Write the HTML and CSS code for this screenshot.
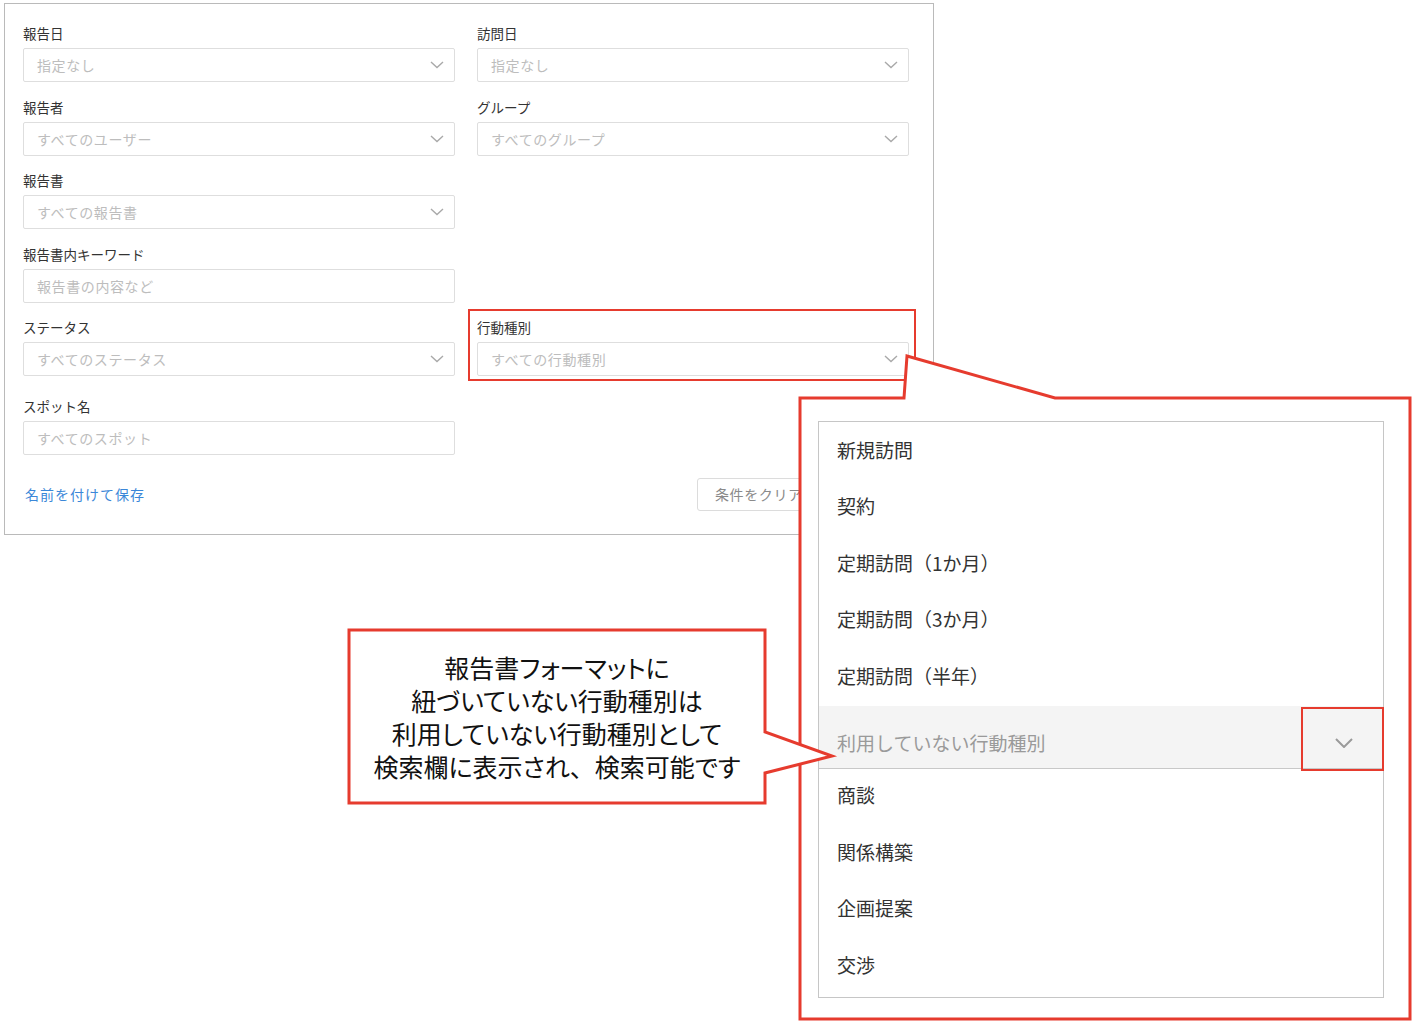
FILE: index.html
```html
<!DOCTYPE html>
<html lang="ja">
  <head>
    <meta charset="UTF-8" />
    <meta name="viewport" content="width=device-width, initial-scale=1.0" />
    <title>検索条件</title>
    <link rel="stylesheet" href="styles.css">
  </head>
  <body>
    <div class="page">
      <div class="panel">
        <div class="fields">
          <div class="field left">
            <label>報告日</label>
            <div class="select"><span>指定なし</span><svg class="chev" viewBox="0 0 14 8"><polyline points="1,1 7,6.5 13,1" /></svg></div>
          </div>
          <div class="field right">
            <label>訪問日</label>
            <div class="select"><span>指定なし</span><svg class="chev" viewBox="0 0 14 8"><polyline points="1,1 7,6.5 13,1" /></svg></div>
          </div>
          <div class="field left">
            <label>報告者</label>
            <div class="select"><span>すべてのユーザー</span><svg class="chev" viewBox="0 0 14 8"><polyline points="1,1 7,6.5 13,1" /></svg></div>
          </div>
          <div class="field right">
            <label>グループ</label>
            <div class="select"><span>すべてのグループ</span><svg class="chev" viewBox="0 0 14 8"><polyline points="1,1 7,6.5 13,1" /></svg></div>
          </div>
          <div class="field left">
            <label>報告書</label>
            <div class="select"><span>すべての報告書</span><svg class="chev" viewBox="0 0 14 8"><polyline points="1,1 7,6.5 13,1" /></svg></div>
          </div>
          <div class="field left">
            <label>報告書内キーワード</label>
            <div class="select"><span>報告書の内容など</span></div>
          </div>
          <div class="field left">
            <label>ステータス</label>
            <div class="select"><span>すべてのステータス</span><svg class="chev" viewBox="0 0 14 8"><polyline points="1,1 7,6.5 13,1" /></svg></div>
          </div>
          <div class="field right marked">
            <label>行動種別</label>
            <div class="select"><span>すべての行動種別</span><svg class="chev" viewBox="0 0 14 8"><polyline points="1,1 7,6.5 13,1" /></svg></div>
          </div>
          <div class="field left spot">
            <label>スポット名</label>
            <div class="select"><span>すべてのスポット</span></div>
          </div>
        </div>

        <div class="footer">
          <a class="save-link" href="#">名前を付けて保存</a>
          <div class="buttons">
            <button class="btn btn-clear">条件をクリア</button>
          </div>
        </div>
      </div>

      <!-- 拡大表示の吹き出し -->
      <svg class="shapes" width="1416" height="1024" viewBox="0 0 1416 1024">
        <polygon points="800,398 904,398 907,356 1055,398 1410,398 1410,1019 800,1019" />
      </svg>

      <div class="menu">
        <div class="menu-item">新規訪問</div>
        <div class="menu-item">契約</div>
        <div class="menu-item">定期訪問（1か月）</div>
        <div class="menu-item">定期訪問（3か月）</div>
        <div class="menu-item">定期訪問（半年）</div>
        <div class="menu-group">
          <span>利用していない行動種別</span>
          <svg class="group-chev" viewBox="0 0 18 10"><polyline points="1,1 9,9 17,1" /></svg>
          <div class="group-mark"></div>
        </div>
        <div class="menu-item">商談</div>
        <div class="menu-item">関係構築</div>
        <div class="menu-item">企画提案</div>
        <div class="menu-item">交渉</div>
      </div>

      <div class="note">
        <svg width="416" height="173" viewBox="0 0 416 173">
          <polygon points="0,0 416,0 416,102 483,126 416,143 416,173 0,173" />
        </svg>
        <div class="note-text">
          報告書フォーマットに<br>
          紐づいていない行動種別は<br>
          利用していない行動種別として<br>
          検索欄に表示され<span class="wide">、</span>検索可能です
        </div>
      </div>
    </div>
  </body>
</html>
```

FILE: styles.css
```css
* {
  box-sizing: border-box;
}
body {
  margin: 0;
  font-family: "Noto Sans CJK JP", "Noto Sans", sans-serif;
  color: #333;
  background-color: #fff;
}
.page {
  position: relative;
  width: 1416px;
  height: 1024px;
  overflow: hidden;
}
.panel {
  width: 930px;
  margin: 3px 0 0 4px;
  padding: 20px 0 23px 18px;
  border: 1px solid #bababa;
  background-color: #fff;
}
.fields {
  display: grid;
  grid-template-columns: 432px 432px;
  column-gap: 22px;
  row-gap: 15.5px;
}
.field {
  display: flex;
  flex-direction: column;
  gap: 4px;
}
.field.left {
  grid-column: 1;
}
.field.right {
  grid-column: 2;
}
.field.spot {
  margin-top: 5px;
}
.field label {
  font-size: 13.5px;
  line-height: 19px;
  margin-bottom: 1px;
  color: #333;
}
.select {
  height: 34px;
  border: 1px solid #dedede;
  border-radius: 2px;
  display: flex;
  align-items: center;
  justify-content: space-between;
  padding: 0 10px 0 13px;
  font-size: 14px;
  letter-spacing: 0.6px;
  color: #bdbdbd;
}
.chev {
  width: 14px;
  height: 8px;
}
.chev polyline {
  fill: none;
  stroke: #a9a9a9;
  stroke-width: 1.4;
}
.field.marked {
  position: relative;
}
.field.marked::after {
  content: "";
  position: absolute;
  left: -9px;
  right: -7px;
  top: -9px;
  bottom: -5px;
  border: 2.5px solid #e63b2e;
}
.footer {
  display: flex;
  justify-content: space-between;
  align-items: center;
  width: 886px;
  margin-top: 23px;
}
.save-link {
  margin-left: 2px;
  color: #3b87d8;
  font-size: 14px;
  letter-spacing: 1px;
  text-decoration: none;
}
.buttons {
  display: flex;
  padding-right: 90px;
}
.btn {
  height: 33px;
  padding: 0 0 0 17px;
  text-align: left;
  border: 1px solid #dcdcdc;
  border-radius: 3px;
  background-color: #fff;
  font-family: inherit;
  font-size: 14px;
  letter-spacing: 0.6px;
  color: #8a8a8a;
}
.btn-clear {
  width: 122px;
}

/* 吹き出し */
.shapes {
  position: absolute;
  left: 0;
  top: 0;
}
.shapes polygon,
.note polygon {
  fill: #fff;
  stroke: #e63b2e;
  stroke-width: 3;
}
.menu {
  position: absolute;
  left: 818px;
  top: 421px;
  width: 566px;
  padding: 1px 0 2px;
  border: 1px solid #c6c6c6;
  background-color: #fff;
  font-size: 19px;
}
.menu-item {
  height: 56.5px;
  display: flex;
  align-items: center;
  padding: 0 0 4px 18px;
  color: #333;
}
.menu-group {
  position: relative;
  height: 63px;
  padding: 12px 0 0 18px;
  display: flex;
  align-items: center;
  justify-content: space-between;
  background-color: #f4f4f4;
  border-bottom: 1px solid #c8c8c8;
  color: #9a9a9a;
}
.group-chev {
  width: 18px;
  height: 10px;
  margin-right: 30px;
}
.group-chev polyline {
  fill: none;
  stroke: #9a9a9a;
  stroke-width: 2;
}
.group-mark {
  position: absolute;
  top: 1px;
  right: -1px;
  width: 83px;
  height: 64px;
  border: 2.5px solid #e63b2e;
}
.note {
  position: absolute;
  left: 349px;
  top: 630px;
  width: 416px;
  height: 173px;
  display: flex;
  align-items: center;
  justify-content: center;
}
.note svg {
  position: absolute;
  left: 0;
  top: 0;
  overflow: visible;
}
.note-text {
  position: relative;
  font-size: 25px;
  line-height: 33px;
  text-align: center;
  color: #111;
  font-feature-settings: "palt";
}
.note-text .wide {
  font-feature-settings: normal;
}
```
